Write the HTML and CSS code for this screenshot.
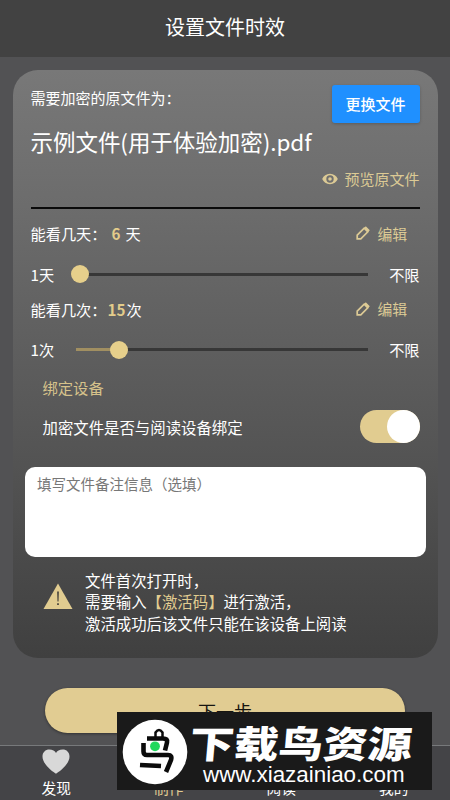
FILE: index.html
```html
<!DOCTYPE html>
<html lang="zh-CN">
<head>
<meta charset="utf-8">
<title>设置文件时效</title>
<link rel="stylesheet" href="styles.css">
</head>
<body>
<div class="screen">
  <header class="header">设置文件时效</header>
  <main class="main">
    <section class="card">
      <div class="file-head">
        <span class="file-label">需要加密的原文件为：</span>
        <button class="change">更换文件</button>
      </div>
      <div class="file-name">示例文件(用于体验加密).pdf</div>
      <div class="preview">
        <svg class="eye" viewBox="0 0 16 12"><path fill="currentColor" fill-rule="evenodd" d="M8 .8C4.4.8 1.5 2.9.2 6c1.3 3.100 4.200 5.200 7.800 5.200S14.500 9.100 15.800 6C14.500 2.900 11.600.8 8 .8ZM8 2.300a3.700 3.700 0 1 1 0 7.400a3.700 3.700 0 0 1 0-7.400ZM8 4.200a1.800 1.800 0 1 0 0 3.600a1.800 1.800 0 0 0 0-3.600Z"/></svg>
        <span>预览原文件</span>
      </div>
      <div class="limit">
        <span>能看几天：</span><b class="days">6</b><span>天</span>
        <span class="edit"><svg class="pencil" viewBox="0 0 14 14"><path d="M1.200 12.800V9.200L8.200 2.200L11.800 5.800L4.800 12.800ZM9.200 .8L13.200 4.800"/></svg>编辑</span>
      </div>
      <div class="range">
        <span class="range-min">1天</span>
        <div class="track"><i class="fill fill-days"></i><i class="thumb"></i></div>
        <span>不限</span>
      </div>
      <div class="limit limit-times">
        <span>能看几次：</span><b class="times">15</b><span>次</span>
        <span class="edit"><svg class="pencil" viewBox="0 0 14 14"><path d="M1.200 12.800V9.200L8.200 2.200L11.800 5.800L4.800 12.800ZM9.200 .8L13.200 4.800"/></svg>编辑</span>
      </div>
      <div class="range">
        <span class="range-min">1次</span>
        <div class="track"><i class="fill fill-times"></i><i class="thumb"></i></div>
        <span>不限</span>
      </div>
      <div class="bind-title">绑定设备</div>
      <div class="bind">
        <span>加密文件是否与阅读设备绑定</span>
        <span class="switch"><i class="knob"></i></span>
      </div>
      <textarea class="note" placeholder="填写文件备注信息（选填）"></textarea>
      <div class="notice">
        <svg class="warn" viewBox="0 0 30 27"><path fill="#e1cc90" d="M15 .5L29.500 26H.5Z"/><path fill="#3b3834" d="M14.200 8.500h1.600l-.3 10h-1ZM14.200 20.300h1.600v1.800h-1.600Z"/></svg>
        <p>文件首次打开时，<br>需要输入<em>【激活码】</em>进行激活，<br>激活成功后该文件只能在该设备上阅读</p>
      </div>
    </section>
    <button class="next">下一步</button>
  </main>
  <nav class="tabs">
    <div class="tab"><svg class="heart" viewBox="0 0 28 25"><path fill="#d8d8d8" d="M14 24.800C11 22.800.5 15.500.5 7.500C.5 3.200 3.500.5 7.300.5C10.500.5 13 1.800 14 4C15 1.800 17.500.5 20.700.5C24.500.5 27.500 3.200 27.500 7.500C27.500 15.500 17 22.800 14 24.800Z"/></svg><span>发现</span></div>
    <div class="tab active"><span>制作</span></div>
    <div class="tab"><span>阅读</span></div>
    <div class="tab"><span>我的</span></div>
  </nav>
  <div class="watermark">
    <svg class="logo" viewBox="0 0 66 66"><circle cx="33" cy="33" r="32.300" fill="#fff"/><g fill="none" stroke="#0b0b0b" stroke-width="4.600"><path d="M25 19.500H41Q46 19.500 45 23.500L43 31.500"/><path d="M21.500 24V32.500Q21.500 36 25 36H46Q50.500 36 49 41L44 53"/><path d="M18 46L39 47"/><path stroke-width="2.500" d="M33.500 18V13.500Q37 8.500 40.500 13.500V18"/></g><circle cx="33" cy="27.300" r="4.900" fill="#20d85c"/></svg>
    <div class="mark-text"><strong>下载鸟资源</strong><span>www.xiazainiao.com</span></div>
  </div>
</div>
</body>
</html>
```
FILE: styles.css
```css
* { box-sizing: border-box; }
body {
  margin: 0;
  font-family: "Noto Sans CJK SC", sans-serif;
  font-size: 15.4px;
  color: #fff;
}
button, textarea { font-family: inherit; border: 0; padding: 0; display: block; }
.screen {
  position: relative;
  width: 450px;
  height: 800px;
  overflow: hidden;
  background: #525254;
  display: flex;
  flex-direction: column;
}
.header {
  height: 57px;
  flex: none;
  background: #424242;
  font-size: 20px;
  line-height: 54px;
  text-align: center;
}
.main { flex: 1; padding: 12.500px 12.500px 0; min-height: 0; }
.card {
  height: 588.500px;
  border-radius: 25px;
  background: linear-gradient(#787878, #6b6b6b 25%, #5a5a5a 55%, #404040);
  padding: 15px 18px 0;
}
.file-head { display: flex; justify-content: space-between; height: 38px; }
.file-label { font-size: 15px; line-height: 26px; }
.change {
  width: 88px;
  height: 38px;
  border-radius: 3px;
  background: #1f90ff;
  color: #fff;
  font-size: 15px;
  font-weight: 500;
  box-shadow: 0 1px 3px rgba(0, 0, 0, .2);
}
.file-name { height: 40px; line-height: 36px; font-size: 22.500px; letter-spacing: -.04px; white-space: nowrap; }
.preview {
  display: flex;
  justify-content: flex-end;
  align-items: center;
  gap: 6px;
  height: 46px;
  padding-bottom: 12px;
  border-bottom: 2px solid #0a0a0a;
  color: #dcca95;
  font-size: 15px;
}
.eye { width: 16px; height: 12px; }
.limit {
  display: flex;
  align-items: center;
  height: 30px;
  margin-top: 9.500px;
  font-size: 15.200px;
}
.limit b { color: #e3cc8b; text-align: center; font-weight: 700; }
.days { width: 19px; }
.times { width: 20px; }
.edit { margin-left: auto; margin-right: 12.500px; color: #dcca95; display: flex; align-items: center; gap: 7px; font-size: 14.800px; }
.pencil { width: 14px; height: 14px; fill: none; stroke: currentColor; stroke-width: 1.700; }
.range { display: flex; align-items: center; height: 30px; margin-top: 11px; font-size: 15.200px; }
.range > span { padding-bottom: 1px; }
.range-min { width: 45px; }
.track { width: 292px; height: 3px; margin-right: auto; background: #373737; display: flex; align-items: center; }
.fill { height: 3px; background: #a18f61; flex: none; }
.fill-days { width: 4px; }
.fill-times { width: 43px; }
.thumb { width: 18px; height: 18px; border-radius: 50%; background: #e6cf8b; flex: none; margin-left: -9px; }
.limit-times { margin-top: 4.500px; }
.bind-title { padding-left: 12px; height: 24px; line-height: 24px; margin-top: 10px; color: #d6c28b; font-size: 15.300px; }
.bind { display: flex; justify-content: space-between; align-items: center; height: 34px; margin-top: 11px; padding-left: 12px; }
.switch { width: 60px; height: 33px; border-radius: 17px; background: #e1cc90; display: flex; justify-content: flex-end; }
.knob { width: 33px; height: 33px; border-radius: 50%; background: #fff; }
.note {
  width: 401px;
  height: 90px;
  margin: 23.500px 0 0 -6px;
  border-radius: 10px;
  background: #fff;
  resize: none;
  padding: 6px 12.500px;
  font-size: 14.500px;
  line-height: 22px;
}
.note::placeholder { color: #777; }
.notice { display: flex; margin-top: 13px; padding-left: 12px; }
.notice p { margin: 0 0 0 12.500px; line-height: 21.300px; white-space: nowrap; }
.notice em { font-style: normal; color: #e1cc90; }
.warn { width: 30px; height: 27px; margin-top: 13px; }
.next {
  width: 360px;
  height: 45px;
  margin: 30px auto 0;
  border-radius: 23px;
  background: #e1cc92;
  color: #171510;
  font-size: 18px;
  box-shadow: 0 1px 3px rgba(0, 0, 0, .4);
}
.tabs {
  height: 55px;
  flex: none;
  display: flex;
  border-top: 1px solid #77797b;
  background: #444447;
}
.tab {
  flex: 1;
  display: flex;
  flex-direction: column;
  justify-content: flex-end;
  align-items: center;
  padding-bottom: 1px;
  font-size: 14.700px;
  line-height: 22px;
}
.active { color: #e1cc92; }
.heart { width: 28px; height: 25px; margin-bottom: 3px; }
.watermark {
  position: absolute;
  left: 117px;
  top: 712px;
  width: 315px;
  height: 78px;
  background: #1a1a1a;
  display: flex;
  padding: 7px 0 0 5px;
}
.logo { width: 66px; height: 66px; flex: none; }
.mark-text { display: flex; flex-direction: column; margin-left: 2px; white-space: nowrap; }
.mark-text strong { font-size: 44.500px; font-weight: 900; line-height: 46px; height: 43px; transform: skewX(-5deg) scaleY(.84); }
.mark-text span { font: 22.400px/26px "Liberation Sans", sans-serif; padding-left: 13px; }
```
